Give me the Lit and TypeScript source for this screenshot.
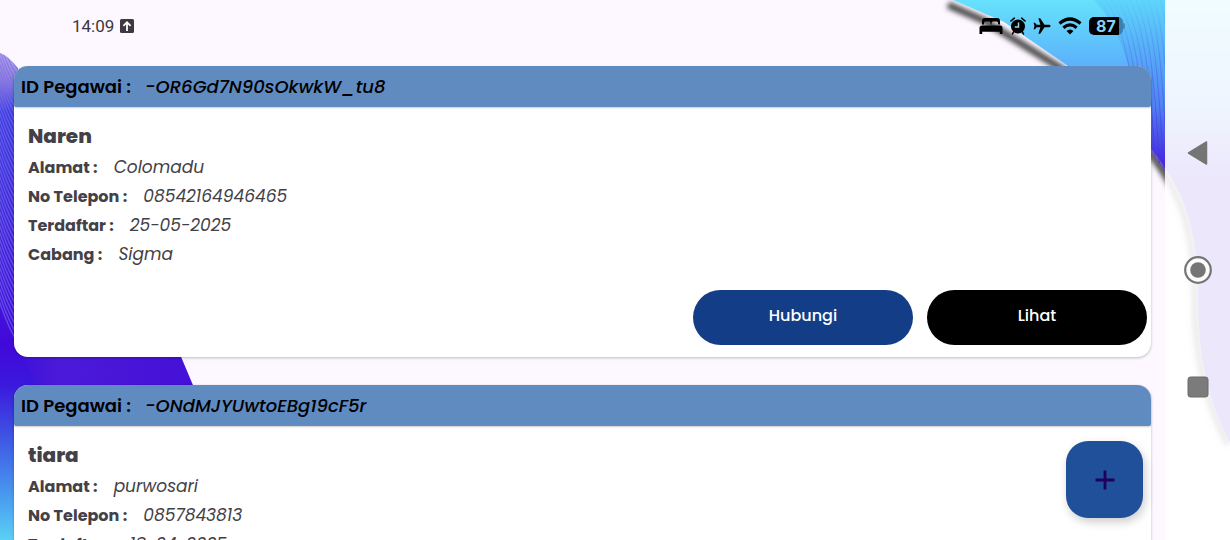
import { LitElement, html, svg, css } from "lit";
import { customElement, property } from "lit/decorators.js";

interface Employee {
  id: string;
  name: string;
  address: string;
  phone: string;
  registered: string;
  branch: string;
}

const employees: Employee[] = [
  { id: "-OR6Gd7N90sOkwkW_tu8", name: "Naren", address: "Colomadu", phone: "08542164946465", registered: "25-05-2025", branch: "Sigma" },
  { id: "-ONdMJYUwtoEBg19cF5r", name: "tiara", address: "purwosari", phone: "0857843813", registered: "18-04-2025", branch: "Sigma" },
];

const range = (n: number) => Array.from({ length: n }, (_, i) => i);

@customElement("wave-backdrop")
export class WaveBackdrop extends LitElement {
  static styles = css`
    :host { display: block; overflow: hidden; }
    .art { display: block; width: 100%; height: 100%; }
  `;

  render() {
    return html`
      <svg class="art" viewBox="0 0 1230 540" preserveAspectRatio="none" aria-hidden="true">
        <defs>
          <linearGradient id="right" x1="0" y1="0" x2="0" y2="1">
            <stop offset="0" stop-color="#66e2fc"></stop>
            <stop offset="0.14" stop-color="#5cb4fb"></stop>
            <stop offset="0.24" stop-color="#5798f8"></stop>
            <stop offset="0.4" stop-color="#4a12dc"></stop>
            <stop offset="1" stop-color="#4a12dc"></stop>
          </linearGradient>
          <linearGradient id="fold" x1="0" y1="0" x2="0" y2="1">
            <stop offset="0" stop-color="#55c6f8"></stop>
            <stop offset="0.5" stop-color="#4c7cf0"></stop>
            <stop offset="1" stop-color="#4415dc"></stop>
          </linearGradient>
          <linearGradient id="stripe" gradientUnits="userSpaceOnUse" x1="0" y1="0" x2="0" y2="170">
            <stop offset="0" stop-color="#3f6ee8" stop-opacity="0.05"></stop>
            <stop offset="0.4" stop-color="#3f5ee8" stop-opacity="0.45"></stop>
            <stop offset="1" stop-color="#3f2ee0" stop-opacity="0.8"></stop>
          </linearGradient>
          <linearGradient id="left" gradientUnits="userSpaceOnUse" x1="0" y1="53" x2="0" y2="540">
            <stop offset="0" stop-color="#b5a6e6"></stop>
            <stop offset="0.06" stop-color="#8a7ad8"></stop>
            <stop offset="0.12" stop-color="#3c3ee0"></stop>
            <stop offset="0.35" stop-color="#4126d8"></stop>
            <stop offset="0.6" stop-color="#4209da"></stop>
            <stop offset="0.68" stop-color="#3a18dc"></stop>
            <stop offset="0.78" stop-color="#3e50e4"></stop>
            <stop offset="0.9" stop-color="#4795ee"></stop>
            <stop offset="1" stop-color="#5bd0f6"></stop>
          </linearGradient>
          <linearGradient id="band" x1="0" y1="0" x2="1" y2="0">
            <stop offset="0" stop-color="#3d10da"></stop>
            <stop offset="0.25" stop-color="#4b1ad8"></stop>
            <stop offset="1" stop-color="#4610d8"></stop>
          </linearGradient>
          <filter id="soft" filterUnits="userSpaceOnUse" x="900" y="-20" width="340" height="500"><feGaussianBlur stdDeviation="2.5"></feGaussianBlur></filter>
          <clipPath id="leftClip"><path d="M0 53C6 55 11 60 18 68V385H0Z"></path></clipPath>
          <clipPath id="rightClip"><path d="M1094 0C1112 20 1124 45 1132 80L1142 138L1165 172V0Z"></path></clipPath>
        </defs>
        <path d="M948 5L985 21L1062 69L1140 141C1186 193 1195 238 1195 300C1195 360 1207 405 1228 444" fill="none" stroke="#4c4c4c" stroke-width="7" filter="url(#soft)"></path>
        <path d="M953 0L1004 22L1068 66L1142 138C1188 190 1198 235 1198 300C1198 360 1210 405 1230 442V0Z" fill="url(#right)"></path>
        <path d="M1094 0C1112 20 1124 45 1132 80L1142 138L1165 172V0Z" fill="url(#fold)" opacity="0.45"></path>
        <g clip-path="url(#rightClip)" fill="none" stroke="url(#stripe)" stroke-width="1">
          ${range(16).map(i => svg`<path d="M${1094 + i * 6} 0C${1114 + i * 5} 30 ${1126 + i * 4} 70 ${1132 + i * 4} 175"></path>`)}
        </g>
        <path d="M0 53C6 55 11 60 18 68V340H40V540H0Z" fill="url(#left)"></path>
        <path d="M14 340H174L195 390H40Z" fill="url(#band)"></path>
        <g clip-path="url(#leftClip)" fill="none" stroke="#7a6df0" stroke-width="1.4" opacity="0.6">
          ${range(40).map(i => svg`<path d="M-4 ${20 + i * 7}C2 ${34 + i * 7} 6 ${52 + i * 7} 18 ${70 + i * 7}"></path>`)}
        </g>
      </svg>
    `;
  }
}

@customElement("status-bar")
export class StatusBar extends LitElement {
  static styles = css`
    :host {
      display: flex;
      align-items: center;
      justify-content: space-between;
      box-sizing: border-box;
      height: 66px;
      padding: 0 40px 14px 72px;
      font-family: Roboto, "Liberation Sans", sans-serif;
    }
    .group { display: flex; align-items: center; }
    .clock { gap: 6px; color: #3c3940; font-size: 17px; line-height: 20px; }
    .system { gap: 7px; color: #000; }
    svg { display: block; }
    .battery { display: flex; align-items: center; }
    .level {
      box-sizing: border-box;
      width: 34px;
      height: 18px;
      padding-left: 7px;
      border-radius: 5px;
      background: linear-gradient(90deg, #000 30px, #3b7fae 30px);
      color: #86d2fb;
      font: 700 16px/18px Inter, sans-serif;
    }
    .tip { width: 2px; height: 6px; border-radius: 0 2px 2px 0; background: #4a86b5; }
  `;

  render() {
    return html`
      <div class="group clock">
        <time>14:09</time>
        <svg width="14" height="14" viewBox="0 0 14 14" aria-hidden="true">
          <rect width="14" height="14" rx="1.5" fill="#3c3940"></rect>
          <path d="M7 12V3.5M3.4 6.8L7 3.2L10.6 6.8" fill="none" stroke="#fff" stroke-width="1.8"></path>
        </svg>
      </div>
      <div class="group system">
        <svg width="24" height="18" viewBox="0 0 24 18" aria-hidden="true">
          <path d="M3 7.500V4Q3 1 6 1H18Q21 1 21 4V7.500H19V6Q19 4.500 17.500 4.500H14Q12.500 4.500 12.500 6V7.500H11.500V6Q11.500 4.500 10 4.500H6.500Q5 4.500 5 6V7.500Z"></path>
          <path d="M3 8.500H21Q23.500 8.500 23.500 11V17H20.800V14.800H3.200V17H.5V11Q.5 8.500 3 8.500Z"></path>
        </svg>
        <svg width="16" height="18" viewBox="0 0 16 18" aria-hidden="true">
          <circle cx="8" cy="9.500" r="7"></circle>
          <path d="M.9 4L4.300 1.200M15.100 4L11.700 1.200M3.800 14.500L2.500 17M12.200 14.500L13.500 17" fill="none" stroke="#000" stroke-width="1.600" stroke-linecap="round"></path>
          <path d="M8.500 5.500V10H4.800" fill="none" stroke="#a5cfe8" stroke-width="1.500"></path>
        </svg>
        <svg width="18" height="18" viewBox="0 0 18 18" aria-hidden="true">
          <path d="M17.500 9Q17.500 10.200 16 10.200H11.500L7.200 16.800H5.400L7.400 10.200H3.600L2 12.200H.6L1.500 9L.6 5.800H2L3.600 7.800H7.400L5.400 1.200H7.200L11.500 7.800H16Q17.500 7.800 17.500 9Z"></path>
        </svg>
        <svg width="24" height="18" viewBox="0 0 24 18" aria-hidden="true">
          <path d="M1.500 6.500Q12 -2.500 22.500 6.500M5.400 10.800Q12 5 18.600 10.800" fill="none" stroke="#000" stroke-width="3.200"></path>
          <path d="M12 17.500L8.500 14Q12 10.800 15.500 14Z"></path>
        </svg>
        <div class="battery"><span class="level">87</span><span class="tip"></span></div>
      </div>
    `;
  }
}

@customElement("employee-card")
export class EmployeeCard extends LitElement {
  @property({ attribute: false }) employee!: Employee;

  static styles = css`
    :host {
      display: block;
      flex: none;
      border-radius: 14px;
      background: #fff;
      box-shadow: 0 1px 3px rgba(0, 0, 0, 0.25);
      color: #434147;
    }
    .head {
      display: flex;
      align-items: center;
      gap: 14px;
      height: 41px;
      padding: 0 7px;
      border-radius: 14px 14px 2px 2px;
      background: #608bc1;
      box-shadow: 0 1px 2px rgba(0, 0, 0, 0.2);
      color: #000;
      font-size: 18px;
    }
    .label { font-weight: 600; white-space: nowrap; }
    .value { font-style: italic; font-weight: 500; }
    .body { padding: 13px 14px 0; }
    .name { margin: 0 0 1px; font-size: 20px; font-weight: 800; line-height: 32px; }
    .details { margin: 0; font-size: 16px; line-height: 29px; }
    .details .label { font-weight: 700; }
    .details .value { font-size: 17px; font-weight: 400; }
    .row { display: flex; gap: 16px; height: 29px; }
    dd, dt { margin: 0; }
    .actions { display: flex; justify-content: flex-end; gap: 14px; padding: 21px 4px 12px; }
    .action {
      width: 220px;
      height: 55px;
      padding: 0 0 5px;
      border: 0;
      border-radius: 28px;
      background: #133e87;
      color: #fff;
      font: inherit;
      font-size: 16px;
      font-weight: 500;
      cursor: pointer;
    }
    .dark { background: #000; }
  `;

  private row(label: string, value: string) {
    return html`<div class="row"><dt class="label">${label} :</dt><dd class="value">${value}</dd></div>`;
  }

  render() {
    const e = this.employee;
    return html`
      <article>
        <header class="head"><span class="label">ID Pegawai :</span><span class="value">${e.id}</span></header>
        <div class="body">
          <h2 class="name">${e.name}</h2>
          <dl class="details">
            ${this.row("Alamat", e.address)}
            ${this.row("No Telepon", e.phone)}
            ${this.row("Terdaftar", e.registered)}
            ${this.row("Cabang", e.branch)}
          </dl>
        </div>
        <footer class="actions">
          <button class="action" type="button">Hubungi</button>
          <button class="action dark" type="button">Lihat</button>
        </footer>
      </article>
    `;
  }
}

@customElement("nav-rail")
export class NavRail extends LitElement {
  static styles = css`
    :host {
      display: flex;
      flex-direction: column;
      align-items: center;
      justify-content: center;
      gap: 85px;
      background: rgba(255, 255, 255, 0.9);
    }
    .key { display: block; padding: 0; border: 0; background: none; cursor: pointer; }
    svg { display: block; }
  `;

  render() {
    return html`
      <button class="key" type="button" aria-label="Kembali">
        <svg width="32" height="32" viewBox="0 0 32 32"><path d="M6.500 16L24.500 5V27Z" fill="#757575" stroke="#757575" stroke-width="1.500" stroke-linejoin="round"></path></svg>
      </button>
      <button class="key" type="button" aria-label="Beranda">
        <svg width="32" height="32" viewBox="0 0 32 32">
          <circle cx="16" cy="16" r="12.800" fill="#fcfcfd" stroke="#757575" stroke-width="2.200"></circle>
          <circle cx="16" cy="16" r="7.800" fill="#757575"></circle>
        </svg>
      </button>
      <button class="key" type="button" aria-label="Aplikasi terbaru">
        <svg width="32" height="32" viewBox="0 0 32 32"><rect x="6" y="6" width="20" height="20" rx="2.500" fill="#7b7b7b" stroke="#6a6a6a"></rect></svg>
      </button>
    `;
  }
}

@customElement("app-root")
export class AppRoot extends LitElement {
  static styles = css`
    :host {
      position: relative;
      display: grid;
      grid-template-columns: minmax(0, 1fr) 65px;
      height: 100vh;
      overflow: hidden;
      background: #fdf7ff;
      font-family: Poppins, Inter, "Liberation Sans", sans-serif;
    }
    .backdrop { position: absolute; inset: 0; }
    .screen { position: relative; display: flex; flex-direction: column; min-height: 0; }
    .list {
      display: flex;
      flex: 1;
      flex-direction: column;
      gap: 28px;
      min-height: 0;
      padding: 0 14px;
      overflow-y: auto;
      scrollbar-width: none;
    }
    .rail { position: relative; }
    .add {
      position: absolute;
      right: 22px;
      bottom: 22px;
      display: grid;
      place-items: center;
      width: 77px;
      height: 77px;
      padding: 0;
      border: 0;
      border-radius: 22px;
      background: #1f5099;
      box-shadow: 2px 4px 10px rgba(0, 0, 0, 0.2);
      cursor: pointer;
    }
  `;

  render() {
    return html`
      <wave-backdrop class="backdrop"></wave-backdrop>
      <div class="screen">
        <status-bar></status-bar>
        <main class="list">
          ${employees.map(e => html`<employee-card .employee=${e}></employee-card>`)}
        </main>
        <button class="add" type="button" aria-label="Tambah pegawai">
          <svg width="20" height="20" viewBox="0 0 20 20"><path d="M10 .5V19.500M.5 10H19.500" stroke="#21005d" stroke-width="2.800"></path></svg>
        </button>
      </div>
      <nav-rail class="rail"></nav-rail>
    `;
  }
}
